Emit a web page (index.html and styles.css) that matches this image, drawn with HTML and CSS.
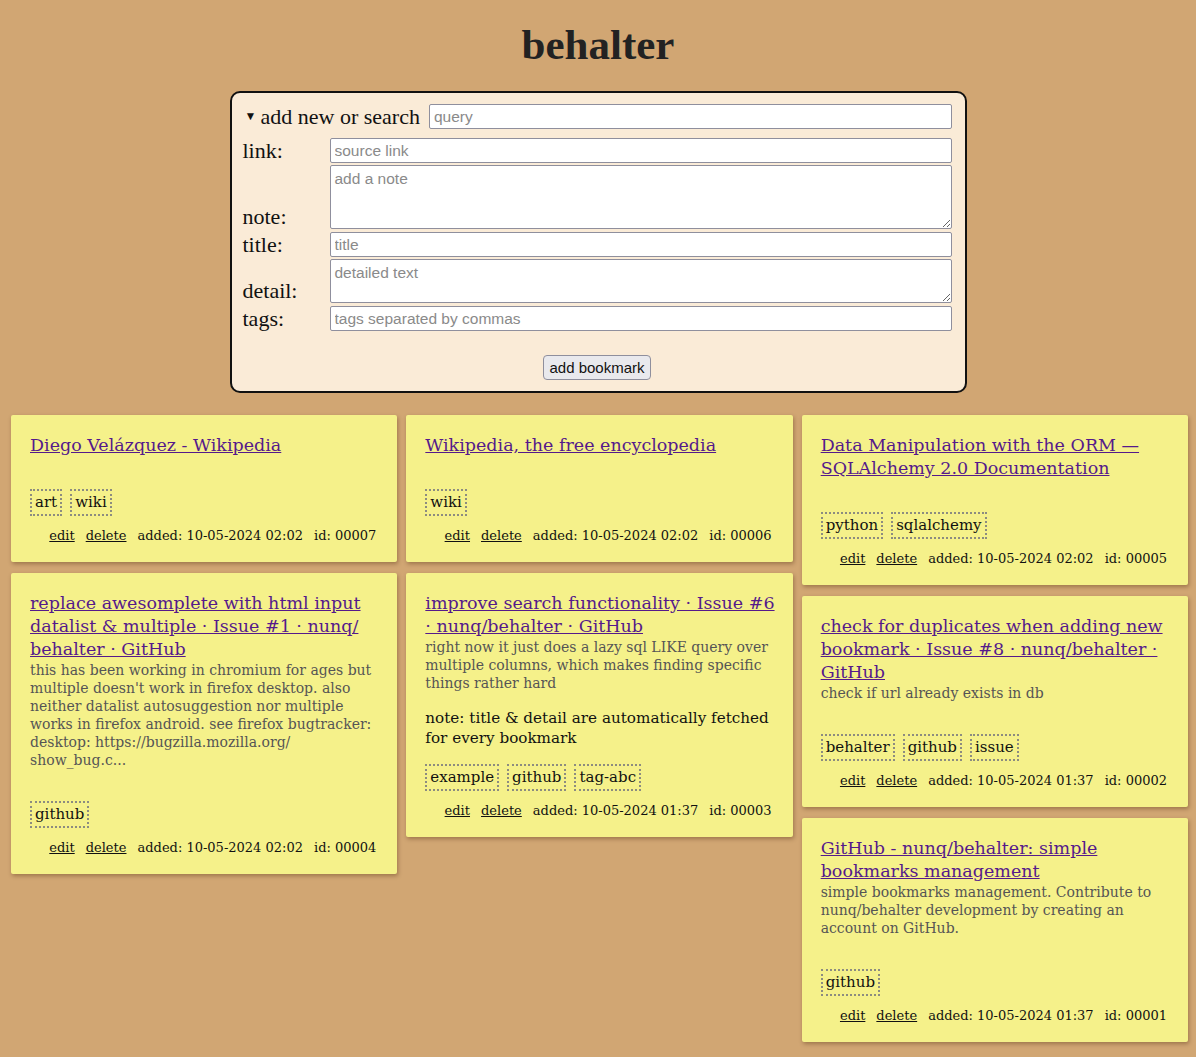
FILE: index.html
```html
<!DOCTYPE html>
<html lang="en">
<head>
<meta charset="utf-8">
<title>behalter</title>
<link rel="stylesheet" href="styles.css">
</head>
<body>
<header class="header"><h1 class="logo">behalter</h1></header>

<form class="panel">
  <div class="summary">
    <span class="marker">▼</span>
    <span class="summary-label">add new or search</span>
    <input class="field grow" type="text" placeholder="query">
  </div>
  <div class="row">
    <label class="lbl">link:</label>
    <input class="field grow" type="text" placeholder="source link">
  </div>
  <div class="row row-area">
    <label class="lbl">note:</label>
    <textarea class="field grow area-note" placeholder="add a note"></textarea>
  </div>
  <div class="row">
    <label class="lbl">title:</label>
    <input class="field grow" type="text" placeholder="title">
  </div>
  <div class="row row-area">
    <label class="lbl">detail:</label>
    <textarea class="field grow area-detail" placeholder="detailed text"></textarea>
  </div>
  <div class="row">
    <label class="lbl">tags:</label>
    <input class="field grow" type="text" placeholder="tags separated by commas">
  </div>
  <div class="actions"><button class="btn" type="button">add bookmark</button></div>
</form>

<main class="board">
  <div class="col">
    <article class="card">
      <a class="title" href="#">Diego Velázquez - Wikipedia</a>
      <div class="desc"></div>
      <p class="note"></p>
      <div class="tags"><span class="tag">art</span><span class="tag">wiki</span></div>
      <div class="meta"><a href="#">edit</a><a href="#">delete</a><span>added: 10-05-2024 02:02</span><span>id: 00007</span></div>
    </article>
    <article class="card">
      <a class="title" href="#">replace awesomplete with html input datalist &amp; multiple · Issue #1 · nunq/ behalter · GitHub</a>
      <div class="desc">this has been working in chromium for ages but multiple doesn't work in firefox desktop. also neither datalist autosuggestion nor multiple works in firefox android. see firefox bugtracker: desktop: https://bugzilla.mozilla.org/ show_bug.c...</div>
      <p class="note"></p>
      <div class="tags"><span class="tag">github</span></div>
      <div class="meta"><a href="#">edit</a><a href="#">delete</a><span>added: 10-05-2024 02:02</span><span>id: 00004</span></div>
    </article>
  </div>
  <div class="col">
    <article class="card">
      <a class="title" href="#">Wikipedia, the free encyclopedia</a>
      <div class="desc"></div>
      <p class="note"></p>
      <div class="tags"><span class="tag">wiki</span></div>
      <div class="meta"><a href="#">edit</a><a href="#">delete</a><span>added: 10-05-2024 02:02</span><span>id: 00006</span></div>
    </article>
    <article class="card">
      <a class="title" href="#">improve search functionality · Issue #6 · nunq/behalter · GitHub</a>
      <div class="desc">right now it just does a lazy sql LIKE query over multiple columns, which makes finding specific things rather hard</div>
      <p class="note">note: title &amp; detail are automatically fetched for every bookmark</p>
      <div class="tags"><span class="tag">example</span><span class="tag">github</span><span class="tag">tag-abc</span></div>
      <div class="meta"><a href="#">edit</a><a href="#">delete</a><span>added: 10-05-2024 01:37</span><span>id: 00003</span></div>
    </article>
  </div>
  <div class="col">
    <article class="card">
      <a class="title" href="#">Data Manipulation with the ORM — SQLAlchemy 2.0 Documentation</a>
      <div class="desc"></div>
      <p class="note"></p>
      <div class="tags"><span class="tag">python</span><span class="tag">sqlalchemy</span></div>
      <div class="meta"><a href="#">edit</a><a href="#">delete</a><span>added: 10-05-2024 02:02</span><span>id: 00005</span></div>
    </article>
    <article class="card">
      <a class="title" href="#">check for duplicates when adding new bookmark · Issue #8 · nunq/behalter · GitHub</a>
      <div class="desc">check if url already exists in db</div>
      <p class="note"></p>
      <div class="tags"><span class="tag">behalter</span><span class="tag">github</span><span class="tag">issue</span></div>
      <div class="meta"><a href="#">edit</a><a href="#">delete</a><span>added: 10-05-2024 01:37</span><span>id: 00002</span></div>
    </article>
    <article class="card">
      <a class="title" href="#">GitHub - nunq/behalter: simple bookmarks management</a>
      <div class="desc">simple bookmarks management. Contribute to nunq/behalter development by creating an account on GitHub.</div>
      <p class="note"></p>
      <div class="tags"><span class="tag">github</span></div>
      <div class="meta"><a href="#">edit</a><a href="#">delete</a><span>added: 10-05-2024 01:37</span><span>id: 00001</span></div>
    </article>
  </div>
</main>
</body>
</html>
```
FILE: styles.css
```css
* { box-sizing: border-box; }

body {
  margin: 0;
  background: #d1a673;
  font-family: "DejaVu Serif", "Liberation Serif", serif;
  color: #111;
}

.header {
  padding: 20px 0 21px;
  text-align: center;
}

.logo {
  margin: 0;
  font-family: "Liberation Serif", serif;
  font-weight: bold;
  font-size: 43px;
  line-height: 50px;
  color: #222;
}

.panel {
  width: 737px;
  margin: 0 auto;
  background: #faebd7;
  border: 2px solid #111;
  border-radius: 10px;
  padding: 11px 13px 11px 11px;
  font-family: "Liberation Serif", serif;
  font-size: 22px;
}

.summary {
  display: flex;
  align-items: center;
  height: 25px;
  margin-bottom: 9px;
}

.marker {
  font-size: 12px;
  width: 18px;
  padding-left: 2px;
}

.summary-label {
  margin-right: 9px;
  white-space: nowrap;
}

.row {
  display: flex;
  align-items: flex-end;
  margin-bottom: 2px;
}

.row-area { margin-bottom: 3px; }

.lbl {
  width: 87px;
  flex: none;
  line-height: 24px;
}

.field {
  height: 25px;
  border: 1px solid #8f8f9d;
  border-radius: 2px;
  background: #fff;
  font-family: "Liberation Sans", sans-serif;
  font-size: 15.5px;
  padding: 2px 4px;
  color: #111;
}

.field::placeholder { color: #8a8a8a; }

.grow { flex: 1; min-width: 0; }

textarea.field { resize: vertical; padding: 4px 4px; }
.area-note { height: 64px; }
.area-detail { height: 44px; }

.actions {
  text-align: center;
  margin-top: 22px;
}

.btn {
  height: 25px;
  padding: 0 5px;
  background: #e9e9ed;
  border: 1px solid #8f8f9d;
  border-radius: 4px;
  font-family: "Liberation Sans", sans-serif;
  font-size: 15px;
  color: #111;
}

.board {
  display: grid;
  grid-template-columns: repeat(3, 1fr);
  gap: 9px;
  padding: 22px 8px 20px 11px;
  align-items: start;
}

.col {
  display: flex;
  flex-direction: column;
  gap: 11px;
}

.card {
  display: flex;
  flex-direction: column;
  background: #f5f18a;
  border-radius: 2px;
  box-shadow: 1px 2px 4px rgba(60, 30, 0, 0.35);
  padding: 19px 15px 16px 19px;
}

.title {
  display: block;
  font-size: 17.5px;
  line-height: 23px;
  color: #551a8b;
}

.desc {
  font-size: 14px;
  line-height: 18px;
  color: #555;
}

.note {
  margin: 16px 0;
  font-size: 15.2px;
  line-height: 20px;
  color: #111;
}

.tags {
  display: flex;
  flex-wrap: wrap;
  gap: 8px;
}

.tag {
  border: 2px dotted #8c8c80;
  padding: 0 3px;
  font-size: 15px;
  line-height: 23px;
}

.meta {
  display: flex;
  justify-content: flex-end;
  gap: 11px;
  margin-top: 10px;
  padding-right: 6px;
  font-size: 13px;
  line-height: 20px;
}

.meta a { color: #111; }
```
